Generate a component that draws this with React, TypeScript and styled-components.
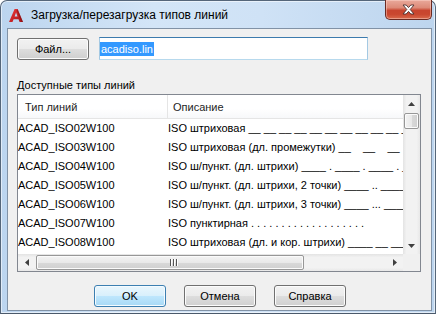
import React from "react";
import styled, { createGlobalStyle } from "styled-components";

const Global = createGlobalStyle`
  html, body { margin: 0; padding: 0; background: #ffffff; }
  body {
    width: 439px; height: 320px; overflow: hidden;
    font-family: "Liberation Sans", Arial, sans-serif;
    font-size: 11px; color: #000;
  }
  * { box-sizing: border-box; }
`;

const Window = styled.div`
  width: 436px;
  height: 314px;
  border: 1px solid #55667a;
  border-bottom-color: #4a596b;
  border-radius: 7px 7px 0 0;
  background: linear-gradient(90deg, #bcd5ef 0%, #d3e5f7 35%, #cfe2f6 60%, #bdd5ee 100%);
  box-shadow: inset 0 0 0 1px rgba(255, 255, 255, 0.55);
  display: flex;
  flex-direction: column;
`;

const TitleBar = styled.div`
  height: 27px;
  display: flex;
  align-items: center;
  flex: none;
`;

const AppIcon = styled.svg`
  margin-left: 8px;
  margin-top: 1px;
  flex: none;
`;

const Title = styled.span`
  margin-left: 8px;
  font-size: 12px;
  color: #000;
  flex: 1;
  white-space: nowrap;
  margin-top: 1px;
`;

const CloseButton = styled.div`
  align-self: flex-start;
  margin-top: -1px;
  margin-right: 3px;
  width: 47px;
  height: 20px;
  border: 1px solid #6a2a22;
  border-top: none;
  border-radius: 0 0 5px 5px;
  background: linear-gradient(180deg, #e9a99b 0%, #dd8a78 40%, #c8452f 55%, #c9472f 75%, #d96a4c 100%);
  box-shadow: inset 0 0 0 1px rgba(255, 220, 210, 0.45);
  display: flex;
  align-items: center;
  justify-content: center;
`;

const Frame = styled.div`
  flex: 1;
  display: flex;
  padding: 0 3px 2px 6px;
`;

const Client = styled.div`
  flex: 1;
  border: 1px solid #8192a6;
  background: #f0f0f0;
  display: flex;
  flex-direction: column;
`;

const FileRow = styled.div`
  margin: 8px 0 0 9px;
  height: 23px;
  display: flex;
  align-items: flex-end;
  gap: 10px;
`;

const Button = styled.div<{ $primary?: boolean }>`
  width: 72px;
  height: 22px;
  border: 1px solid ${(p) => (p.$primary ? "#3c7fb1" : "#707070")};
  border-radius: 3px;
  background: ${(p) =>
    p.$primary
      ? "linear-gradient(180deg, #eaf6fd 0%, #d9f0fc 48%, #bee6fd 52%, #a7d9f5 100%)"
      : "linear-gradient(180deg, #f2f2f2 0%, #ebebeb 48%, #dddddd 52%, #cfcfcf 100%)"};
  box-shadow: inset 0 0 0 1px ${(p) => (p.$primary ? "#f4fbff" : "#fcfcfc")};
  display: flex;
  align-items: center;
  justify-content: center;
  font-size: 11px;
  color: #000;
  flex: none;
`;

const TextInput = styled.div`
  width: 269px;
  height: 23px;
  background: #fff;
  border: 1px solid #a4c9e3;
  border-top-color: #3d7bad;
  border-bottom-color: #b7d9ed;
  display: flex;
  align-items: center;
  padding-left: 0px;
`;

const Selected = styled.span`
  background: #3399ff;
  color: #fff;
  font-size: 11px;
  line-height: 14px;
  padding: 0 1px 0 1px;
`;

const GroupLabel = styled.div`
  margin: 19px 0 0 9px;
  line-height: 13px;
  font-size: 11px;
  color: #000;
`;

const List = styled.div`
  margin: 2px 0 0 9px;
  width: 404px;
  height: 178px;
  border: 1px solid #828790;
  background: #fff;
  display: grid;
  grid-template-columns: 1fr 17px;
  grid-template-rows: 1fr 17px;
`;

const ListBody = styled.div`
  overflow: hidden;
  display: flex;
  flex-direction: column;
`;

const Header = styled.div`
  height: 24px;
  flex: none;
  border-bottom: 1px solid #e5e5e5;
  background: linear-gradient(180deg, #ffffff 0%, #ffffff 60%, #f7f8fa 100%);
  display: grid;
  grid-template-columns: 149px 1fr;
`;

const HeaderCell = styled.div<{ $divider?: boolean }>`
  display: flex;
  align-items: center;
  padding-left: ${(p) => (p.$divider ? "5px" : "7px")};
  border-left: ${(p) => (p.$divider ? "1px solid #e5e5e5" : "none")};
  color: #1e1e1e;
  white-space: nowrap;
`;

const Row = styled.div`
  height: 19px;
  flex: none;
  display: grid;
  grid-template-columns: 150px 1fr;
  line-height: 19px;
  white-space: pre;
`;

const Cell = styled.div`
  overflow: hidden;
  white-space: pre;
`;

const VScroll = styled.div`
  grid-row: 1 / 2;
  grid-column: 2 / 3;
  display: flex;
  flex-direction: column;
  background: linear-gradient(90deg, #e3e3e3 0%, #f2f2f2 20%, #f2f2f2 80%, #e8e8e8 100%);
`;

const HScroll = styled.div`
  grid-row: 2 / 3;
  grid-column: 1 / 2;
  display: flex;
  background: linear-gradient(180deg, #e3e3e3 0%, #f2f2f2 20%, #f2f2f2 80%, #e8e8e8 100%);
`;

const Corner = styled.div`
  grid-row: 2 / 3;
  grid-column: 2 / 3;
  background: #f0f0f0;
`;

const Arrow = styled.div`
  width: 17px;
  height: 17px;
  flex: none;
  display: flex;
  align-items: center;
  justify-content: center;
`;

const Track = styled.div`
  flex: 1;
`;

const VThumb = styled.div`
  margin: 1px 1px 0 1px;
  height: 16px;
  flex: none;
  border: 1px solid #979797;
  border-radius: 2px;
  background: linear-gradient(90deg, #f3f3f3 0%, #e9e9e9 50%, #d9d9d9 51%, #d0d0d0 100%);
  box-shadow: inset 0 0 0 1px #fbfbfb;
`;

const HThumb = styled.div`
  margin: 1px 0 1px 1px;
  width: 268px;
  flex: none;
  border: 1px solid #979797;
  border-radius: 2px;
  background: linear-gradient(180deg, #f3f3f3 0%, #e9e9e9 50%, #d9d9d9 51%, #d0d0d0 100%);
  box-shadow: inset 0 0 0 1px #fbfbfb;
  display: flex;
  align-items: center;
  justify-content: center;
`;

const Grip = styled.div`
  display: flex;
  gap: 2px;
  margin-left: 6px;
`;

const GripLine = styled.div`
  width: 1px;
  height: 7px;
  background: #555;
  box-shadow: 1px 0 0 #fff;
`;

const ButtonRow = styled.div`
  margin-top: 13px;
  display: flex;
  justify-content: center;
  gap: 18px;
  padding-left: 1px;
`;

const rows: [string, string][] = [
  ["ACAD_ISO02W100", "ISO штриховая __ __ __ __ __ __ __ __ __ __ __ __ __ __ __ __"],
  ["ACAD_ISO03W100", "ISO штриховая (дл. промежутки) __    __    __    __    __"],
  ["ACAD_ISO04W100", "ISO ш/пункт. (дл. штрихи) ____ . ____ . ____ . ____ . ____"],
  ["ACAD_ISO05W100", "ISO ш/пункт. (дл. штрихи, 2 точки) ____ .. ____ .. ____"],
  ["ACAD_ISO06W100", "ISO ш/пункт. (дл. штрихи, 3 точки) ____ ... ____ ... ____"],
  ["ACAD_ISO07W100", "ISO пунктирная . . . . . . . . . . . . . . . . . . ."],
  ["ACAD_ISO08W100", "ISO штриховая (дл. и кор. штрихи) ____ __ ____ __ ____"],
  ["ACAD_ISO09W100", "ISO штриховая (дл. и 2 кор. штриха) ____ __ __ ____"],
];

const Tri = ({ dir }: { dir: "up" | "down" | "left" | "right" }) => {
  const pts: Record<string, string> = {
    up: "0,4 3.5,0 7,4",
    down: "0,0 3.5,4 7,0",
    left: "4,0 0,3.5 4,7",
    right: "0,0 4,3.5 0,7",
  };
  const vertical = dir === "up" || dir === "down";
  return (
    <svg width={vertical ? 7 : 4} height={vertical ? 4 : 7} viewBox={vertical ? "0 0 7 4" : "0 0 4 7"}>
      <polygon points={pts[dir]} fill="#3f3f3f" />
    </svg>
  );
};

export default function App() {
  return (
    <>
      <Global />
      <Window>
        <TitleBar>
          <AppIcon width="14" height="13" viewBox="0 0 14 13">
            <defs>
              <linearGradient id="ag" x1="0" y1="0" x2="1" y2="1">
                <stop offset="0" stopColor="#f0383a" />
                <stop offset="1" stopColor="#a5141a" />
              </linearGradient>
            </defs>
            <path
              d="M0 13 L5.6 0 H8.6 L14 13 H10.6 L9.5 10.2 H4.6 L3.5 13 Z M5.6 7.6 H8.5 L7.05 3.6 Z"
              fill="url(#ag)"
              fillRule="evenodd"
            />
            <path d="M8.6 0 L14 13 H12.4 L7.6 1.6 Z" fill="#7e0e12" opacity="0.55" />
          </AppIcon>
          <Title>Загрузка/перезагрузка типов линий</Title>
          <CloseButton>
            <svg width="13" height="11" viewBox="0 0 13 11">
              <path
                d="M1 1 H4.2 L6.5 3.6 L8.8 1 H12 L8.2 5.5 L12 10 H8.8 L6.5 7.4 L4.2 10 H1 L4.8 5.5 Z"
                fill="#ffffff"
                stroke="#4a3030"
                strokeWidth="0.9"
                strokeLinejoin="round"
              />
            </svg>
          </CloseButton>
        </TitleBar>
        <Frame>
          <Client>
            <FileRow>
              <Button>Файл...</Button>
              <TextInput>
                <Selected>acadiso.lin</Selected>
              </TextInput>
            </FileRow>
            <GroupLabel>Доступные типы линий</GroupLabel>
            <List>
              <ListBody>
                <Header>
                  <HeaderCell>Тип линий</HeaderCell>
                  <HeaderCell $divider>Описание</HeaderCell>
                </Header>
                {rows.map(([name, desc]) => (
                  <Row key={name}>
                    <Cell>{name}</Cell>
                    <Cell>{desc}</Cell>
                  </Row>
                ))}
              </ListBody>
              <VScroll>
                <Arrow>
                  <Tri dir="up" />
                </Arrow>
                <VThumb />
                <Track />
                <Arrow>
                  <Tri dir="down" />
                </Arrow>
              </VScroll>
              <HScroll>
                <Arrow>
                  <Tri dir="left" />
                </Arrow>
                <HThumb>
                  <Grip>
                    <GripLine />
                    <GripLine />
                    <GripLine />
                  </Grip>
                </HThumb>
                <Track />
                <Arrow>
                  <Tri dir="right" />
                </Arrow>
              </HScroll>
              <Corner />
            </List>
            <ButtonRow>
              <Button $primary>OK</Button>
              <Button>Отмена</Button>
              <Button>Справка</Button>
            </ButtonRow>
          </Client>
        </Frame>
      </Window>
    </>
  );
}
